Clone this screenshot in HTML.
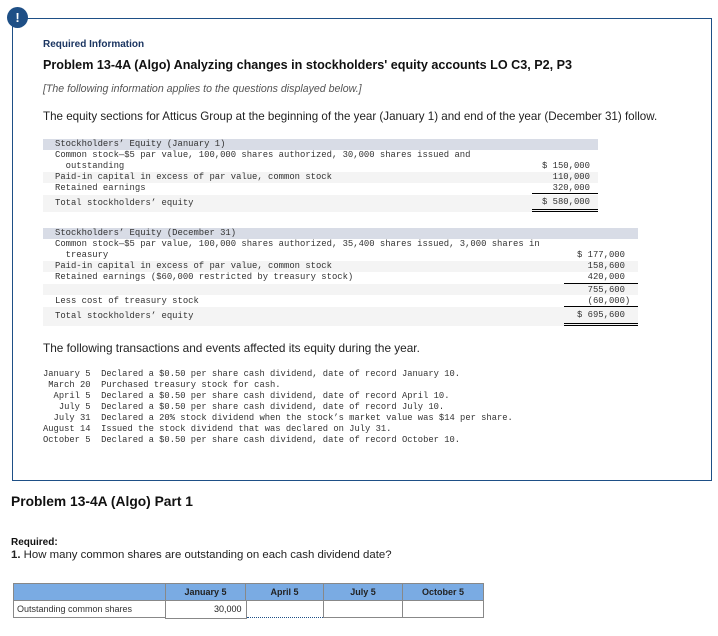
<!DOCTYPE html>
<html><head><meta charset="utf-8"><style>
*{margin:0;padding:0;box-sizing:border-box}
body{width:718px;height:636px;background:#fff;position:relative;font-family:"Liberation Sans",sans-serif;color:#222;overflow:hidden}
.a{position:absolute;white-space:pre}
.m{font-family:"Liberation Mono",monospace;font-size:8.9px;color:#333;line-height:11px}
.sh{position:absolute;background:#f4f4f4}
.hd{position:absolute;background:#d8dce6}
.ln{position:absolute;height:1px;background:#000}
td{border:1px solid #888;font-size:9px;height:17px;padding:0 3px}
</style></head><body>
<div style="position:absolute;left:12px;top:18px;width:700px;height:463px;border:1.5px solid #1e4f86"></div>
<div style="position:absolute;left:7px;top:7px;width:21px;height:21px;border-radius:50%;background:#1e4f86;color:#fff;font-weight:bold;font-size:13px;text-align:center;line-height:21px">!</div>
<div class="a" style="left:43px;top:39px;font-size:10px;font-weight:bold;color:#1b3561">Required Information</div>
<div class="a" style="left:43px;top:58px;font-size:12.6px;font-weight:bold;color:#111">Problem 13-4A (Algo) Analyzing changes in stockholders' equity accounts LO C3, P2, P3</div>
<div class="a" style="left:43px;top:83px;font-size:10.6px;font-style:italic;color:#555">[The following information applies to the questions displayed below.]</div>
<div class="a" style="left:43px;top:110px;font-size:11.6px;color:#222">The equity sections for Atticus Group at the beginning of the year (January 1) and end of the year (December 31) follow.</div>

<div class="hd" style="left:43px;top:139px;width:555px;height:11px"></div>
<div class="sh" style="left:43px;top:172px;width:555px;height:11px"></div>
<div class="sh" style="left:43px;top:195px;width:555px;height:17px"></div>
<div class="a m" style="left:55px;top:139px">Stockholders’ Equity (January 1)
Common stock—$5 par value, 100,000 shares authorized, 30,000 shares issued and
  outstanding
Paid-in capital in excess of par value, common stock
Retained earnings</div>
<div class="a m" style="left:55px;top:198px">Total stockholders’ equity</div>
<div class="a m" style="left:542px;top:161px;text-align:right">$ 150,000
  110,000
  320,000</div>
<div class="ln" style="left:532px;top:193px;width:66px"></div>
<div class="a m" style="left:542px;top:197px">$ 580,000</div>
<div class="ln" style="left:532px;top:209px;width:66px"></div>
<div class="ln" style="left:532px;top:211px;width:66px"></div>

<div class="hd" style="left:43px;top:228px;width:595px;height:11px"></div>
<div class="sh" style="left:43px;top:261px;width:595px;height:11px"></div>
<div class="sh" style="left:43px;top:284px;width:595px;height:11px"></div>
<div class="sh" style="left:43px;top:307px;width:595px;height:19px"></div>
<div class="a m" style="left:55px;top:228px">Stockholders’ Equity (December 31)
Common stock—$5 par value, 100,000 shares authorized, 35,400 shares issued, 3,000 shares in
  treasury
Paid-in capital in excess of par value, common stock
Retained earnings ($60,000 restricted by treasury stock)</div>
<div class="a m" style="left:55px;top:296px">Less cost of treasury stock</div>
<div class="a m" style="left:55px;top:311px">Total stockholders’ equity</div>
<div class="a m" style="left:577px;top:250px">$ 177,000
  158,600
  420,000</div>
<div class="ln" style="left:564px;top:283px;width:74px"></div>
<div class="a m" style="left:577px;top:285px">  755,600
  (60,000)</div>
<div class="ln" style="left:564px;top:306px;width:74px"></div>
<div class="a m" style="left:577px;top:310px">$ 695,600</div>
<div class="ln" style="left:564px;top:323px;width:74px"></div>
<div class="ln" style="left:564px;top:325px;width:74px"></div>

<div class="a" style="left:43px;top:341px;font-size:11.8px;color:#222">The following transactions and events affected its equity during the year.</div>
<div class="a m" style="left:43px;top:369px;font-size:8.8px">January 5  Declared a $0.50 per share cash dividend, date of record January 10.
 March 20  Purchased treasury stock for cash.
  April 5  Declared a $0.50 per share cash dividend, date of record April 10.
   July 5  Declared a $0.50 per share cash dividend, date of record July 10.
  July 31  Declared a 20% stock dividend when the stock’s market value was $14 per share.
August 14  Issued the stock dividend that was declared on July 31.
October 5  Declared a $0.50 per share cash dividend, date of record October 10.</div>

<div class="a" style="left:11px;top:494px;font-size:13.8px;font-weight:bold;color:#111">Problem 13-4A (Algo) Part 1</div>
<div class="a" style="left:11px;top:537px;font-size:10px;font-weight:bold;color:#111">Required:</div>
<div class="a" style="left:11px;top:549px;font-size:11.4px;color:#222"><b>1.</b> How many common shares are outstanding on each cash dividend date?</div>

<table style="position:absolute;left:13px;top:583px;border-collapse:collapse;width:471px">
<tr style="background:#7aabe3;font-weight:bold;text-align:center;color:#222"><td style="width:152px"></td><td style="width:80px">January 5</td><td style="width:78px">April 5</td><td style="width:79px">July 5</td><td>October 5</td></tr>
<tr><td style="color:#333">Outstanding common shares</td><td style="text-align:right;border:2px solid #fff;outline:1px solid #888">30,000</td><td style="border:1px dotted #1e4f86"></td><td></td><td></td></tr>
</table>
</body></html>
